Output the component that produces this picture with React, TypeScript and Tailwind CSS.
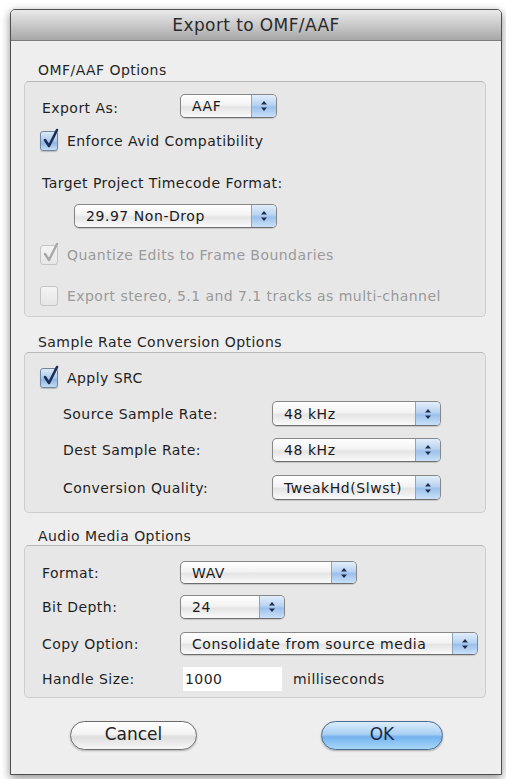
import React from "react";

const FONT = { fontFamily: '"DejaVu Sans", "Liberation Sans", sans-serif' };

function Arrows() {
  return (
    <svg width="8" height="12" viewBox="0 0 8 12">
      <path d="M4 1 L7 4.5 L1 4.5 Z" fill="#1f2d4d" />
      <path d="M4 11 L7 7.5 L1 7.5 Z" fill="#1f2d4d" />
    </svg>
  );
}

function Popup({ text, w, h }: { text: string; w: string; h: string }) {
  return (
    <div
      className={`${w} ${h} flex rounded-[5px] border border-[#878787] border-b-[#6d6d6d] overflow-hidden shadow-[0_1px_1px_rgba(0,0,0,0.15)] bg-[linear-gradient(to_bottom,#ffffff_0%,#f3f3f3_45%,#e4e4e4_55%,#fafafa_100%)]`}
    >
      <div className="flex-1 flex items-center pl-[11px] text-[14px] tracking-[0.55px] text-[#1a1a1a] leading-none">
        {text}
      </div>
      <div className="w-[25px] flex items-center justify-center border-l border-[#8ea3bd] bg-[linear-gradient(to_bottom,#e2eefb_0%,#b9d3f1_45%,#9cc0ec_55%,#c9e0f8_100%)]">
        <Arrows />
      </div>
    </div>
  );
}

function CheckBox({ checked, disabled }: { checked: boolean; disabled?: boolean }) {
  if (disabled) {
    return (
      <div className="relative w-[18px] h-[20px] rounded-[3px] border border-[#c4c4c4] bg-[linear-gradient(to_bottom,#f4f4f4,#e6e6e6)] shrink-0">
        {checked && (
          <svg className="absolute left-[1px] top-[-4px]" width="18" height="22" viewBox="0 0 18 22">
            <path d="M3 12 L7 18 L15 2" fill="none" stroke="#a8a8a8" strokeWidth="2.4" strokeLinecap="round" strokeLinejoin="round" />
          </svg>
        )}
      </div>
    );
  }
  return (
    <div className="relative w-[18px] h-[20px] rounded-[3px] border border-[#6f87a3] bg-[linear-gradient(to_bottom,#dceaf8_0%,#a9c8ea_50%,#8fb6e2_60%,#c4dcf4_100%)] shadow-[0_1px_1px_rgba(0,0,0,0.2)] shrink-0">
      {checked && (
        <svg className="absolute left-[1px] top-[-4px]" width="18" height="22" viewBox="0 0 18 22">
          <path d="M3 12 L7 18 L15 2" fill="none" stroke="#1b2d58" strokeWidth="2.6" strokeLinecap="round" strokeLinejoin="round" />
        </svg>
      )}
    </div>
  );
}

function SectionLabel({ text, mt, mb }: { text: string; mt: string; mb: string }) {
  return (
    <div className={`${mt} ${mb} h-[16px] pl-[14px] flex items-center text-[14px] tracking-[0.45px] text-[#262626] leading-none`}>
      {text}
    </div>
  );
}

const box = "rounded-[5px] border border-[#cdcdcd] border-t-[#b9b9b9] bg-[#e7e7e7]";

export default function App() {
  return (
    <div className="bg-white w-[506px] h-[779px] pt-[9px] pl-[10px]" style={FONT}>
      <div className="w-[492px] h-[766px] border border-[#4e4e4e] rounded-t-[5px] bg-[#eeeeee] shadow-[0_3px_10px_rgba(0,0,0,0.45)] flex flex-col">
        {/* title bar */}
        <div className="h-[31px] shrink-0 rounded-t-[4px] border-b border-[#7d7d7d] bg-[linear-gradient(to_bottom,#e9e9e9_0%,#d0d0d0_40%,#b5b5b5_80%,#a6a6a6_100%)] flex items-center justify-center text-[17px] tracking-[0.4px] text-[#2b2b2b] leading-none">
          Export to OMF/AAF
        </div>

        <div className="pl-[13px] pr-[15px] flex flex-col">
          <SectionLabel text="OMF/AAF Options" mt="mt-[21px]" mb="mb-[3px]" />
          <div className={`${box} h-[236px] pl-[15px] pt-[12px] flex flex-col text-[14px] tracking-[0.45px] text-[#1f1f1f] leading-none`}>
            <div className="h-[24px] flex items-center">
              <div className="w-[140px] pl-[2px] pt-[3px]">Export As:</div>
              <Popup text="AAF" w="w-[97px]" h="h-[24px]" />
            </div>
            <div className="mt-[12px] h-[21px] flex items-center gap-[9px]">
              <CheckBox checked />
              <span>Enforce Avid Compatibility</span>
            </div>
            <div className="mt-[24px] h-[16px] pl-[2px] flex items-center">Target Project Timecode Format:</div>
            <div className="mt-[13px] h-[24px] pl-[34px] flex items-center">
              <Popup text="29.97 Non-Drop" w="w-[203px]" h="h-[24px]" />
            </div>
            <div className="mt-[17px] h-[20px] flex items-center gap-[9px] text-[#9a9a9a]">
              <CheckBox checked disabled />
              <span>Quantize Edits to Frame Boundaries</span>
            </div>
            <div className="mt-[21px] h-[20px] flex items-center gap-[9px] text-[#9a9a9a]">
              <CheckBox checked={false} disabled />
              <span>Export stereo, 5.1 and 7.1 tracks as multi-channel</span>
            </div>
          </div>

          <SectionLabel text="Sample Rate Conversion Options" mt="mt-[17px]" mb="mb-[2px]" />
          <div className={`${box} h-[161px] pl-[15px] pt-[15px] flex flex-col text-[14px] tracking-[0.45px] text-[#1f1f1f] leading-none`}>
            <div className="h-[20px] flex items-center gap-[9px]">
              <CheckBox checked />
              <span>Apply SRC</span>
            </div>
            <div className="mt-[13px] h-[25px] pl-[23px] flex items-center">
              <div className="w-[209px]">Source Sample Rate:</div>
              <Popup text="48 kHz" w="w-[169px]" h="h-[25px]" />
            </div>
            <div className="mt-[12px] h-[24px] pl-[23px] flex items-center">
              <div className="w-[209px]">Dest Sample Rate:</div>
              <Popup text="48 kHz" w="w-[169px]" h="h-[24px]" />
            </div>
            <div className="mt-[13px] h-[25px] pl-[23px] flex items-center">
              <div className="w-[209px]">Conversion Quality:</div>
              <Popup text="TweakHd(Slwst)" w="w-[169px]" h="h-[25px]" />
            </div>
          </div>

          <SectionLabel text="Audio Media Options" mt="mt-[15px]" mb="mb-[1px]" />
          <div className={`${box} h-[153px] pl-[17px] pt-[15px] flex flex-col text-[14px] tracking-[0.45px] text-[#1f1f1f] leading-none`}>
            <div className="h-[23px] flex items-center">
              <div className="w-[138px]">Format:</div>
              <Popup text="WAV" w="w-[177px]" h="h-[23px]" />
            </div>
            <div className="mt-[11px] h-[24px] flex items-center">
              <div className="w-[138px]">Bit Depth:</div>
              <Popup text="24" w="w-[105px]" h="h-[24px]" />
            </div>
            <div className="mt-[13px] h-[23px] flex items-center">
              <div className="w-[138px]">Copy Option:</div>
              <Popup text="Consolidate from source media" w="w-[298px]" h="h-[23px]" />
            </div>
            <div className="mt-[12px] h-[24px] flex items-center">
              <div className="w-[141px]">Handle Size:</div>
              <div className="w-[99px] h-[24px] bg-white flex items-center pl-[2px] text-[14px]">1000</div>
              <div className="ml-[11px]">milliseconds</div>
            </div>
          </div>

          <div className="mt-[22px] h-[30px] flex items-center">
            <div className="ml-[46px] w-[127px] h-[29px] rounded-full border border-[#6b6b6b] shadow-[0_1px_2px_rgba(0,0,0,0.25)] bg-[linear-gradient(to_bottom,#ffffff_0%,#f2f2f2_45%,#dedede_55%,#f7f7f7_100%)] flex items-center justify-center text-[17px] text-[#222]">
              Cancel
            </div>
            <div className="ml-[124px] w-[122px] h-[29px] rounded-full border border-[#4b6a8e] shadow-[0_1px_2px_rgba(0,0,0,0.3)] bg-[linear-gradient(to_bottom,#dcecfb_0%,#a9d0f5_45%,#74b2ee_55%,#a8d6fa_100%)] flex items-center justify-center text-[17px] text-[#1b2b48]">
              OK
            </div>
          </div>
        </div>
      </div>
    </div>
  );
}
